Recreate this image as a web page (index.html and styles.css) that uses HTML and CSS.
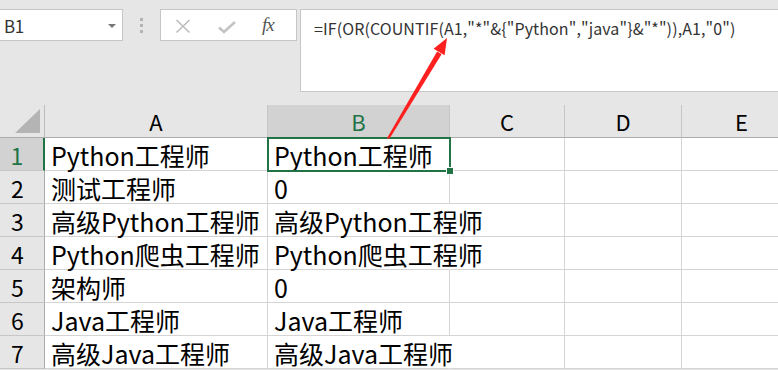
FILE: index.html
```html
<!DOCTYPE html>
<html lang="zh-CN">
<head>
<meta charset="utf-8">
<title>Excel</title>
<link rel="stylesheet" href="styles.css">
</head>
<body>
<div class="app">
  <div class="toolbar">
    <div class="namebox">
      <span class="name">B1</span>
      <svg class="caret" width="8" height="4" viewBox="0 0 8 4"><path d="M0 0H8L4 4Z" fill="#777"/></svg>
    </div>
    <div class="grip"><i></i><i></i><i></i></div>
    <div class="buttons">
      <svg class="btn" width="16" height="16" viewBox="0 0 16 16"><path d="M1.5 2L14.5 14.5M14.5 2L1.5 14.5" stroke="#bdbdbd" stroke-width="1.6" fill="none"/></svg>
      <svg class="btn" width="18" height="16" viewBox="0 0 18 16"><path d="M1 9.5L6 14L17 4" stroke="#c4c4c4" stroke-width="2.6" fill="none"/></svg>
      <span class="fx">fx</span>
    </div>
    <div class="formula">=IF(OR(COUNTIF(A1,"*"&amp;{"Python","java"}&amp;"*")),A1,"0")</div>
  </div>

  <div class="sheet">
    <div class="corner"><svg width="26" height="25" viewBox="0 0 26 25"><path d="M25 0V24H0Z" fill="#b4b4b4"/></svg></div>
    <div class="ch">A</div>
    <div class="ch sel">B</div>
    <div class="ch">C</div>
    <div class="ch">D</div>
    <div class="ch">E</div>

    <div class="rh sel">1</div>
    <div class="c">Python工程师</div>
    <div class="c">Python工程师</div>
    <div class="c"></div><div class="c"></div><div class="c"></div>

    <div class="rh">2</div>
    <div class="c">测试工程师</div>
    <div class="c">0</div>
    <div class="c"></div><div class="c"></div><div class="c"></div>

    <div class="rh">3</div>
    <div class="c">高级Python工程师</div>
    <div class="c spill">高级Python工程师</div>
    <div class="c"></div><div class="c"></div><div class="c"></div>

    <div class="rh">4</div>
    <div class="c">Python爬虫工程师</div>
    <div class="c spill">Python爬虫工程师</div>
    <div class="c"></div><div class="c"></div><div class="c"></div>

    <div class="rh">5</div>
    <div class="c">架构师</div>
    <div class="c">0</div>
    <div class="c"></div><div class="c"></div><div class="c"></div>

    <div class="rh">6</div>
    <div class="c">Java工程师</div>
    <div class="c">Java工程师</div>
    <div class="c"></div><div class="c"></div><div class="c"></div>

    <div class="rh">7</div>
    <div class="c">高级Java工程师</div>
    <div class="c spill">高级Java工程师</div>
    <div class="c"></div><div class="c"></div><div class="c"></div>

    <div class="selection"><span class="handle"></span></div>
  </div>

  <svg class="arrow" width="778" height="370" viewBox="0 0 778 370">
    <path d="M386.8 138.5 L389.6 138.5 L441.6 54.2 L437.1 51.6 Z" fill="#fe1f1f"/>
    <path d="M447 38 L444.6 55.2 L433.6 48.8 Z" fill="#fe1f1f"/>
  </svg>
</div>
</body>
</html>
```

FILE: styles.css
```css
html, body {
  margin: 0;
  padding: 0;
  background: #e6e6e6;
  overflow: hidden;
}

.app {
  position: relative;
  width: 778px;
  height: 370px;
  overflow: hidden;
  font-family: "Noto Sans CJK SC", "Noto Sans", sans-serif;
}

.toolbar {
  display: flex;
  align-items: flex-start;
  height: 105px;
  padding-top: 9px;
  box-sizing: border-box;
}

.namebox {
  display: flex;
  align-items: center;
  justify-content: space-between;
  width: 124px;
  height: 32px;
  margin-left: -1px;
  box-sizing: border-box;
  border: 1px solid #c6c6c6;
  background: #fff;
  padding: 0 6px 0 4px;
}

.name {
  font-size: 17px;
  color: #333;
  letter-spacing: -0.3px;
}

.caret {
  margin-top: 1px;
}

.grip {
  display: flex;
  flex-direction: column;
  align-items: center;
  gap: 3px;
  width: 37px;
  padding-top: 9px;
}

.grip i {
  display: block;
  width: 3px;
  height: 3px;
  background: #b3b3b3;
}

.buttons {
  display: flex;
  align-items: center;
  width: 137px;
  height: 32px;
  box-sizing: border-box;
  border: 1px solid #c6c6c6;
  background: #fff;
  padding-left: 14px;
}

.buttons .btn {
  margin-top: 2px;
}

.buttons .btn + .btn {
  margin-left: 27px;
}

.fx {
  margin-left: 26px;
  font-family: "Liberation Serif", serif;
  font-style: italic;
  font-size: 19px;
  color: #555;
  letter-spacing: -1px;
}

.formula {
  flex: 1;
  margin-left: 3px;
  margin-right: -2px;
  height: 83px;
  box-sizing: border-box;
  border: 1px solid #c6c6c6;
  background: #fff;
  padding: 8px 0 0 13px;
  font-size: 16px;
  line-height: 20px;
  color: #333;
  white-space: nowrap;
  letter-spacing: 0.1px;
}

.sheet {
  position: relative;
  display: grid;
  grid-template-columns: 45px 223px 182px 115px 117px 120px;
  grid-auto-rows: 33px;
  background: #fff;
}

.corner,
.ch,
.rh,
.c {
  box-sizing: border-box;
  white-space: nowrap;
}

.corner {
  background: #e6e6e6;
  border-right: 1px solid #bcbcbc;
  border-bottom: 1px solid #ababab;
  display: flex;
  align-items: flex-end;
  justify-content: flex-end;
  padding: 0 3px 3px 0;
}

.corner svg {
  display: block;
}

.ch {
  background: #e6e6e6;
  border-right: 1px solid #c6c6c6;
  border-bottom: 1px solid #ababab;
  text-align: center;
  font-size: 22px;
  line-height: 32px;
  color: #000;
}

.ch.sel {
  background: #d2d2d2;
  color: #217346;
}

.rh {
  background: #e6e6e6;
  border-right: 1px solid #ababab;
  border-bottom: 1px solid #c6c6c6;
  text-align: center;
  padding-right: 9px;
  font-size: 23px;
  line-height: 32px;
  padding-top: 1px;
  color: #000;
}

.rh.sel {
  background: #d2d2d2;
  color: #217346;
  border-right: 2px solid #217346;
}

.c {
  border-right: 1px solid #d4d4d4;
  border-bottom: 1px solid #d4d4d4;
  padding: 2px 0 0 6px;
  font-size: 25px;
  line-height: 31px;
  color: #000;
  overflow: visible;
}

.c.spill {
  border-right-color: transparent;
}

.selection {
  position: absolute;
  left: 267px;
  top: 32px;
  width: 184px;
  height: 35px;
  box-sizing: border-box;
  border: 2px solid #217346;
  pointer-events: none;
}

.handle {
  position: absolute;
  right: -5px;
  bottom: -5px;
  width: 6px;
  height: 6px;
  background: #217346;
  border: 1px solid #fff;
}

.arrow {
  position: absolute;
  left: 0;
  top: 0;
  pointer-events: none;
}
```
